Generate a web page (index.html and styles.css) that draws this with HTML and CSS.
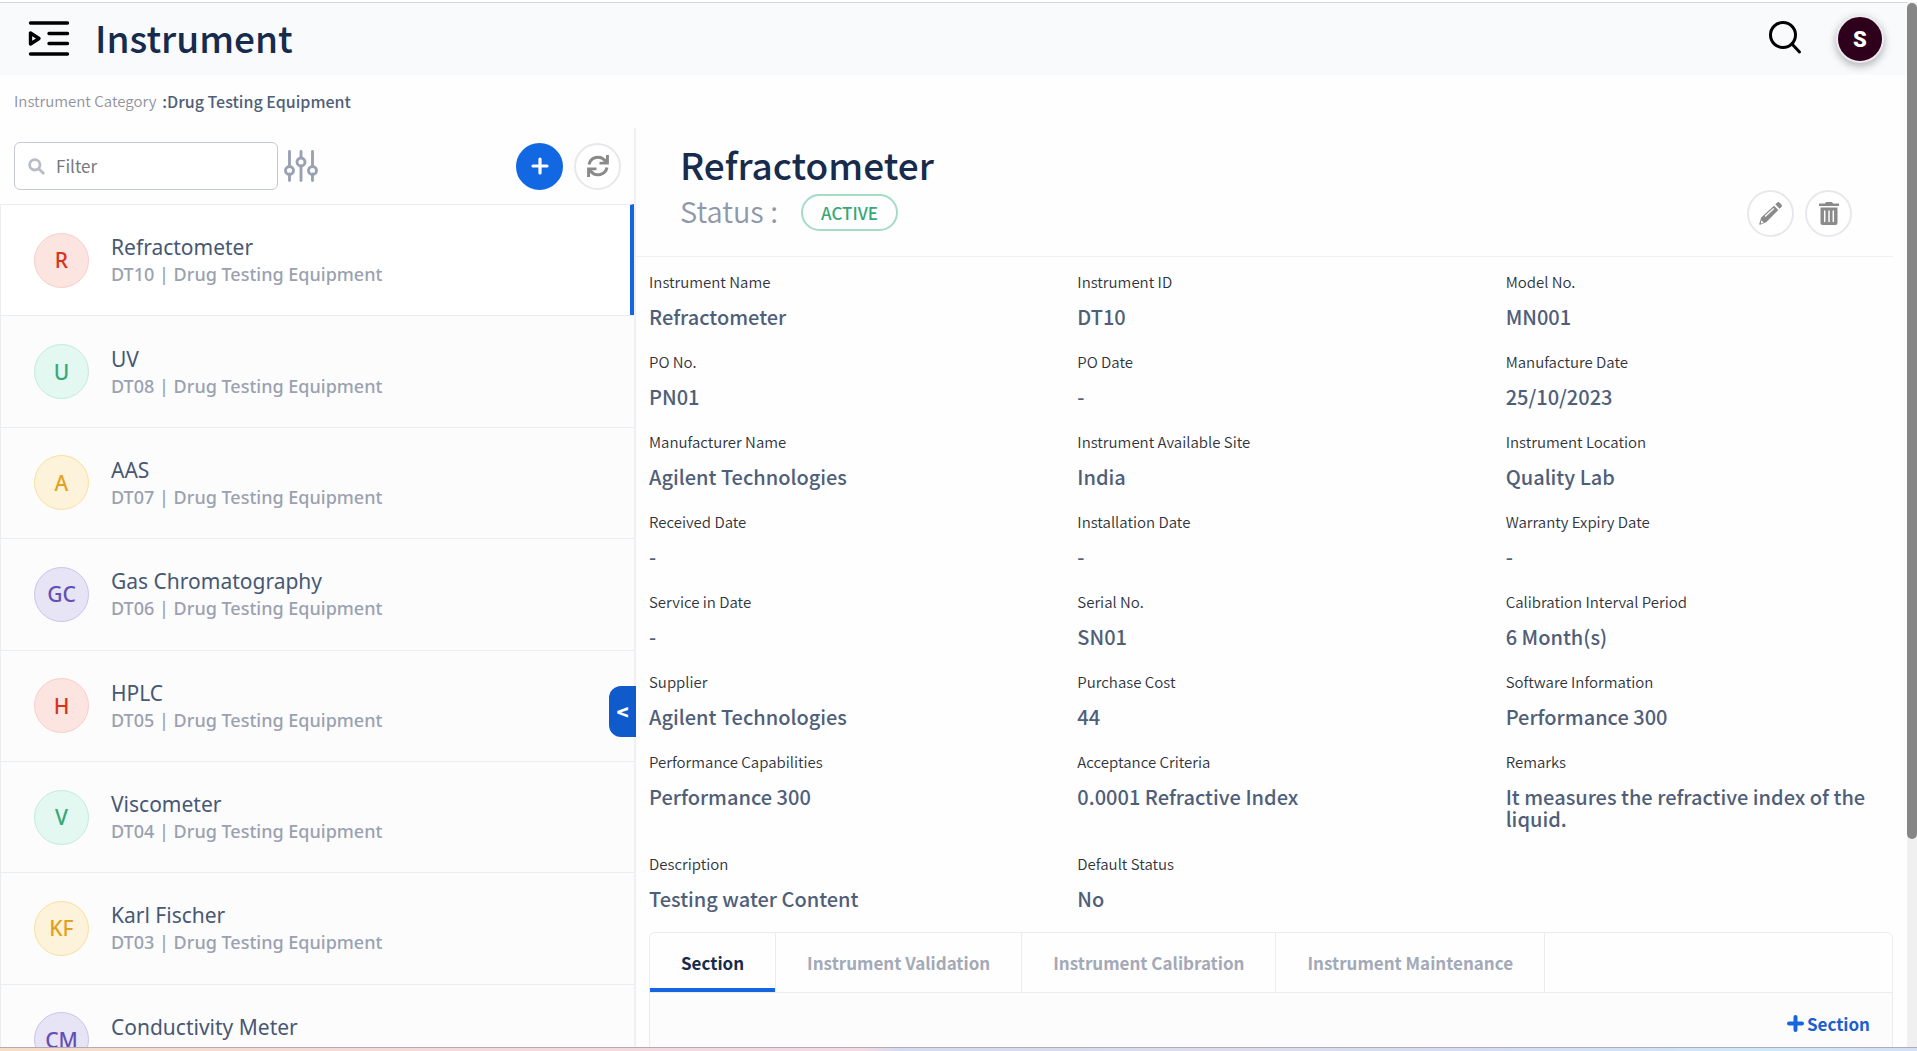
FILE: index.html
```html
<!DOCTYPE html>
<html lang="en">
<head>
<meta charset="utf-8">
<title>Instrument</title>
<link rel="stylesheet" href="styles.css">
</head>
<body>
<div class="viewport">
  <div class="app">
    <header class="topbar">
      <button class="plain-btn" type="button" aria-label="Toggle menu">
        <svg width="44" height="44" viewBox="0 0 44 44" fill="none" stroke="#000" stroke-width="3.400" stroke-linecap="round"><path d="M3.500 6H40.500M22 16.500H40.500M22 26.500H40.500M3.500 37H40.500"/><path d="M3.500 16V27L12 21.500Z" stroke-linejoin="round"/></svg>
      </button>
      <h1 class="page-title">Instrument</h1>
      <button class="plain-btn search-btn" type="button" aria-label="Search">
        <svg width="34" height="36" viewBox="0 0 34 36" fill="none" stroke="#000" stroke-width="3" stroke-linecap="round"><circle cx="15" cy="14" r="12.500"/><path d="M24 23 31.500 31"/></svg>
      </button>
      <button class="user" type="button">S</button>
    </header>
    <p class="crumb"><span class="crumb-label">Instrument Category</span><span class="crumb-value">:Drug Testing Equipment</span></p>
    <div class="columns">
      <aside class="list-pane">
        <div class="toolbar">
          <label class="filter">
            <svg width="17" height="17" viewBox="0 0 17 17" fill="none" stroke="#b9bcc6" stroke-width="2.800" stroke-linecap="round"><circle cx="6.800" cy="6.800" r="5.200"/><path d="M11 11 15.300 15.300"/></svg>
            <input class="filter-input" type="text" placeholder="Filter" aria-label="Filter">
          </label>
          <button class="plain-btn" type="button" aria-label="Filter options">
            <svg width="34" height="32" viewBox="0 0 34 32" fill="none" stroke="#9aa1b3" stroke-width="2.900" stroke-linecap="round"><path d="M5.500 1.500V15.500M5.500 24V30.500M17 1.500V7.500M17 16V30.500M28.500 1.500V15.500M28.500 24V30.500"/><circle cx="5.500" cy="20.500" r="4"/><circle cx="17" cy="12" r="4"/><circle cx="28.500" cy="20.500" r="4"/></svg>
          </button>
          <button class="round-btn add-btn" type="button" aria-label="Add instrument">
            <svg width="18" height="18" viewBox="0 0 18 18" stroke="#fff" stroke-width="3.200" stroke-linecap="round"><path d="M9 2V16M2 9H16"/></svg>
          </button>
          <button class="round-btn" type="button" aria-label="Refresh">
            <svg width="22" height="22" viewBox="0 0 22 22"><g fill="none" stroke="#8a8a8a" stroke-width="3"><path d="M2 9.500A9.200 9.200 0 0 1 18 5.500"/><path d="M20 12.500A9.200 9.200 0 0 1 4 16.500"/></g><path fill="#8a8a8a" d="M21.900 0V9.600H12.500V6.700H16.500L19 3.500V0ZM.1 22V12.400H9.500V15.300H5.500L3 18.500V22Z"/></svg>
          </button>
        </div>
        <ul class="items">
          <li class="item selected"><span class="avatar red">R</span><div><h3 class="item-name">Refractometer</h3><p class="item-sub">DT10 | Drug Testing Equipment</p></div></li>
          <li class="item"><span class="avatar green">U</span><div><h3 class="item-name">UV</h3><p class="item-sub">DT08 | Drug Testing Equipment</p></div></li>
          <li class="item"><span class="avatar amber">A</span><div><h3 class="item-name">AAS</h3><p class="item-sub">DT07 | Drug Testing Equipment</p></div></li>
          <li class="item"><span class="avatar violet">GC</span><div><h3 class="item-name">Gas Chromatography</h3><p class="item-sub">DT06 | Drug Testing Equipment</p></div></li>
          <li class="item"><span class="avatar red">H</span><div><h3 class="item-name">HPLC</h3><p class="item-sub">DT05 | Drug Testing Equipment</p></div></li>
          <li class="item"><span class="avatar green">V</span><div><h3 class="item-name">Viscometer</h3><p class="item-sub">DT04 | Drug Testing Equipment</p></div></li>
          <li class="item"><span class="avatar amber">KF</span><div><h3 class="item-name">Karl Fischer</h3><p class="item-sub">DT03 | Drug Testing Equipment</p></div></li>
          <li class="item"><span class="avatar violet">CM</span><div><h3 class="item-name">Conductivity Meter</h3><p class="item-sub">DT02 | Drug Testing Equipment</p></div></li>
        </ul>
        <button class="collapse" type="button" aria-label="Collapse list">&lt;</button>
      </aside>
      <main class="detail">
        <div class="detail-head">
          <div>
            <h2 class="page-title">Refractometer</h2>
            <div class="status"><span class="status-label">Status :</span><span class="pill">ACTIVE</span></div>
          </div>
          <div class="actions">
            <button class="round-btn" type="button" aria-label="Edit">
              <svg width="23" height="23" viewBox="0 0 23 23"><path fill="#8a8a8a" d="M16.300 2.300 18 .8a2 2 0 0 1 2.900.1L22.200 2.300a2 2 0 0 1 0 2.900L20.600 6.800ZM15 3.700 19.300 8.100 7.200 20.300 1.200 22.700a.7.700 0 0 1-.9-.9L2.200 15.500Z"/><path d="M6 14.500 14.800 6.500" stroke="#fff" stroke-width="1.300"/><path fill="#fff" d="M2.300 18.300 4.800 20.700 1.800 21.400Z"/></svg>
            </button>
            <button class="round-btn" type="button" aria-label="Delete">
              <svg width="20" height="23" viewBox="0 0 20 23"><path fill="#8a8a8a" d="M0 1.500H6L7 0H13L14 1.500H20V4H0ZM1.500 5.500H18.500V21a2 2 0 0 1-2 2H3.500a2 2 0 0 1-2-2Z"/><path stroke="#fff" stroke-width="1.500" stroke-linecap="round" d="M5.700 9V19.500M10 9V19.500M14.300 9V19.500"/></svg>
            </button>
          </div>
        </div>
        <dl class="fields">
          <div><dt>Instrument Name</dt><dd>Refractometer</dd></div>
          <div><dt>Instrument ID</dt><dd>DT10</dd></div>
          <div><dt>Model No.</dt><dd>MN001</dd></div>
          <div><dt>PO No.</dt><dd>PN01</dd></div>
          <div><dt>PO Date</dt><dd>-</dd></div>
          <div><dt>Manufacture Date</dt><dd>25/10/2023</dd></div>
          <div><dt>Manufacturer Name</dt><dd>Agilent Technologies</dd></div>
          <div><dt>Instrument Available Site</dt><dd>India</dd></div>
          <div><dt>Instrument Location</dt><dd>Quality Lab</dd></div>
          <div><dt>Received Date</dt><dd>-</dd></div>
          <div><dt>Installation Date</dt><dd>-</dd></div>
          <div><dt>Warranty Expiry Date</dt><dd>-</dd></div>
          <div><dt>Service in Date</dt><dd>-</dd></div>
          <div><dt>Serial No.</dt><dd>SN01</dd></div>
          <div><dt>Calibration Interval Period</dt><dd>6 Month(s)</dd></div>
          <div><dt>Supplier</dt><dd>Agilent Technologies</dd></div>
          <div><dt>Purchase Cost</dt><dd>44</dd></div>
          <div><dt>Software Information</dt><dd>Performance 300</dd></div>
          <div><dt>Performance Capabilities</dt><dd>Performance 300</dd></div>
          <div><dt>Acceptance Criteria</dt><dd>0.0001 Refractive Index</dd></div>
          <div><dt>Remarks</dt><dd>It measures the refractive index of the liquid.</dd></div>
          <div><dt>Description</dt><dd>Testing water Content</dd></div>
          <div><dt>Default Status</dt><dd>No</dd></div>
        </dl>
        <section class="tab-card">
          <div class="tabs" role="tablist">
            <button class="tab active" type="button" role="tab" aria-selected="true">Section</button>
            <button class="tab" type="button" role="tab">Instrument Validation</button>
            <button class="tab" type="button" role="tab">Instrument Calibration</button>
            <button class="tab" type="button" role="tab">Instrument Maintenance</button>
          </div>
          <div class="tab-body">
            <button class="add-section" type="button"><svg width="17" height="17" viewBox="0 0 17 17" stroke="#1565e0" stroke-width="4" stroke-linecap="round"><path d="M8.500 2V15M2 8.500H15"/></svg>Section</button>
          </div>
        </section>
      </main>
    </div>
  </div>
  <div class="scroll-track"><div class="scroll-thumb"></div></div>
</div>
<div class="desktop-edge"></div>
</body>
</html>
```
FILE: styles.css
```css
* { box-sizing: border-box; }
body {
  margin: 0;
  height: 100vh;
  display: flex;
  flex-direction: column;
  overflow: hidden;
  background: #fefefe;
  color: #172b4d;
  font-family: "Noto Sans CJK SC", "Noto Sans", sans-serif;
  font-size: 16px;
}
h1, h2, h3, p, ul, dl, dd { margin: 0; padding: 0; }
ul { list-style: none; }
button { font-family: inherit; margin: 0; cursor: pointer; }
svg { display: block; }

.viewport {
  flex: 1;
  min-height: 0;
  display: flex;
  border-top: 2px solid #fff;
}
.app {
  flex: 1;
  min-width: 0;
  display: flex;
  flex-direction: column;
  border-top: 1px solid #d5d8db;
}
.scroll-track { width: 10px; background: #f0f0f0; }
.scroll-thumb { height: 80%; margin-top: 1px; border-radius: 5px; background: #868686; }
.desktop-edge {
  flex: none;
  height: 4px;
  border-top: 1px solid #b3aab8;
  background: linear-gradient(90deg, #f8dcc8, #f5d9dc 25%, #f5d9e4 45%, #d5daf2 47%, #dcdcec 65%, #d4dcf6 78%, #cde8fa 92%, #d3e0f8);
}

.topbar {
  flex: none;
  height: 72px;
  display: flex;
  align-items: center;
  padding: 0 23px 0 27px;
  background: #f8fafc;
}
.plain-btn { border: 0; padding: 0; background: none; }
.page-title {
  font-size: 37px;
  line-height: 46px;
  font-weight: 500;
  color: #172b4d;
}
.topbar .page-title { margin-left: 24px; padding-bottom: 4px; }
.search-btn { margin-left: auto; }
.user {
  width: 48px;
  height: 48px;
  margin-left: 34px;
  border: 2px solid #efeaf0;
  border-radius: 50%;
  background: #2e001c;
  color: #fff;
  font-family: Roboto, sans-serif;
  font-size: 22px;
  font-weight: 900;
  padding: 0;
  box-shadow: 0 3px 8px rgba(0, 0, 0, .3);
}

.crumb {
  flex: none;
  display: flex;
  gap: 6px;
  padding: 14px 14px 0;
  height: 53px;
  line-height: 24px;
}
.crumb-label { font-size: 15px; font-weight: 350; color: #8f929c; }
.crumb-value { font-size: 16px; font-weight: 500; color: #505f79; }

.columns { flex: 1; min-height: 0; display: flex; overflow: hidden; }
.list-pane {
  position: relative;
  width: 636px;
  display: flex;
  flex-direction: column;
  border-right: 2px solid #eef0f3;
}
.toolbar {
  flex: none;
  height: 76px;
  display: flex;
  align-items: center;
  padding: 0 13px 0 14px;
}
.filter {
  width: 264px;
  height: 48px;
  margin-right: 6px;
  padding: 0 13px;
  display: flex;
  align-items: center;
  gap: 11px;
  border: 1px solid #c4c8d0;
  border-radius: 6px;
  background: #fff;
}
.filter-input {
  flex: 1;
  min-width: 0;
  border: 0;
  outline: 0;
  padding: 0;
  background: none;
  font: 17px/24px "Noto Sans CJK SC", sans-serif;
}
.filter-input::placeholder { color: #75787f; opacity: 1; }
.round-btn {
  flex: none;
  width: 47px;
  height: 47px;
  display: flex;
  align-items: center;
  justify-content: center;
  padding: 0;
  border: 2px solid #e6e8ec;
  border-radius: 50%;
  background: #fff;
}
.add-btn { margin-left: auto; margin-right: 11px; border-color: #1268e3; background: #1268e3; }

.items { flex: none; height: 891px; display: grid; grid-auto-rows: 1fr; }
.item {
  display: flex;
  align-items: center;
  gap: 22px;
  padding-left: 33px;
  border-top: 1px solid #eaeef0;
  border-left: 1px solid #eaeef0;
  background: #fcfcfd;
  font-family: "Noto Sans", sans-serif;
}
.item.selected { background: #fff; border-right: 4px solid #1565e0; }
.avatar {
  width: 55px;
  height: 55px;
  border: 1px solid;
  border-radius: 50%;
  display: flex;
  align-items: center;
  justify-content: center;
  font-size: 21px;
  font-weight: 500;
}
.red { background: #fce5e0; border-color: #facdc7; color: #d9341a; }
.green { background: #e2f8f0; border-color: #c0eddc; color: #36a877; }
.amber { background: #fdf2da; border-color: #fbdf9f; color: #e3a01c; }
.violet { background: #e7e4f5; border-color: #cac4ec; color: #6350b5; }
.item-name { font-size: 21px; line-height: 28px; font-weight: 400; color: #475873; }
.item-sub { font-size: 18px; line-height: 26px; font-weight: 500; color: #9aa1b0; }
.collapse {
  position: absolute;
  right: -2px;
  top: 558px;
  width: 27px;
  height: 51px;
  padding: 0;
  border: 0;
  border-radius: 12px 0 0 12px;
  background: #0f5bcb;
  color: #fff;
  font-size: 20px;
  font-weight: 900;
}

.detail { flex: 1; min-width: 0; padding-right: 14px; }
.detail-head {
  height: 129px;
  display: flex;
  justify-content: space-between;
  align-items: flex-start;
  padding: 13px 41px 0 44px;
  border-bottom: 1px solid #eef0f2;
}
.status { display: flex; align-items: center; gap: 23px; height: 50px; }
.status-label { font-size: 29px; line-height: 36px; padding-bottom: 4px; font-weight: 350; color: #8f98aa; }
.pill {
  width: 97px;
  height: 37px;
  border: 2px solid #a5dcc6;
  border-radius: 19px;
  line-height: 33px;
  text-align: center;
  font-size: 17px;
  font-weight: 500;
  color: #36a877;
}
.actions { display: flex; gap: 11px; padding-top: 49px; }

.fields {
  display: grid;
  grid-template-columns: repeat(3, 1fr);
  column-gap: 41px;
  padding: 13px 0 0 13px;
}
.fields > div { padding-bottom: 22px; }
.fields dt { font-size: 15px; line-height: 24px; font-weight: 350; color: #30343c; }
.fields dd { margin-top: 12px; font-size: 20px; line-height: 22px; font-weight: 500; color: #505f79; }

.tab-card {
  margin-left: 13px;
  border: 1px solid #eaedf0;
  border-radius: 6px 6px 0 0;
}
.tabs { display: flex; height: 60px; border-bottom: 1px solid #eaedf0; }
.tab {
  border: 0;
  border-right: 1px solid #eaedf0;
  padding: 0 31px;
  background: none;
  font-size: 17px;
  font-weight: 700;
  color: #a3a9b7;
}
.tab.active { color: #172b4d; box-shadow: inset 0 -4px #1565e0; }
.tab-body { display: flex; justify-content: flex-end; height: 138px; padding: 18px 22px; background: #fcfcfd; }
.add-section {
  display: flex;
  align-items: center;
  gap: 3px;
  height: 24px;
  border: 0;
  padding: 0;
  background: none;
  color: #1c5fcf;
  font-size: 17px;
  font-weight: 700;
}
```
